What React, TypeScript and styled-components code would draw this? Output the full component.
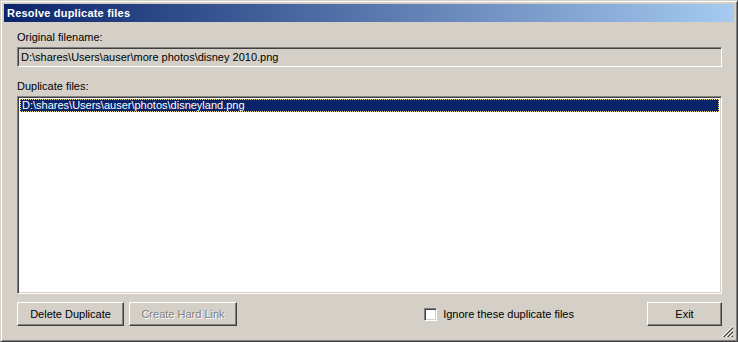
import React from 'react';
import styled, { createGlobalStyle } from 'styled-components';

const GlobalStyle = createGlobalStyle`
  html, body {
    margin: 0;
    padding: 0;
    background: #d4d0c8;
  }
  body {
    font-family: "Liberation Sans", Arial, sans-serif;
    font-size: 11px;
  }
`;

const Window = styled.div`
  box-sizing: border-box;
  width: 738px;
  height: 342px;
  background: #d4d0c8;
  border: 1px solid;
  border-color: #d4d0c8 #404040 #404040 #d4d0c8;
  box-shadow: inset 1px 1px #ffffff, inset -1px -1px #808080;
  padding: 3px;
  display: flex;
  flex-direction: column;
  position: relative;
`;

const TitleBar = styled.div`
  height: 18px;
  background: linear-gradient(to right, #0a246a, #a6caf0);
  color: #ffffff;
  font-weight: bold;
  font-size: 11px;
  letter-spacing: 0.2px;
  display: flex;
  align-items: center;
  padding-left: 3px;
`;

const Body = styled.div`
  flex: 1;
  display: flex;
  flex-direction: column;
  padding: 9px 12px 12px 13px;
`;

const Label = styled.div`
  color: #000000;
  line-height: 13px;
  margin-bottom: 3px;
`;

const ReadOnlyField = styled.div`
  box-sizing: border-box;
  height: 20px;
  border: 1px solid;
  border-color: #808080 #ffffff #ffffff #808080;
  box-shadow: inset 1px 1px #404040, inset -1px -1px #d4d0c8;
  background: #d4d0c8;
  display: flex;
  align-items: center;
  padding-left: 3px;
  margin-bottom: 13px;
  white-space: nowrap;
`;

const ListBox = styled.div`
  box-sizing: border-box;
  flex: 1;
  border: 1px solid;
  border-color: #808080 #ffffff #ffffff #808080;
  box-shadow: inset 1px 1px #404040, inset -1px -1px #d4d0c8;
  background: #ffffff;
  padding: 2px;
`;

const ListItem = styled.div<{ $selected?: boolean }>`
  box-sizing: border-box;
  height: 13px;
  line-height: 11px;
  padding-left: 1px;
  white-space: nowrap;
  color: ${(p) => (p.$selected ? '#ffffff' : '#000000')};
  background: ${(p) => (p.$selected ? '#0a246a' : 'transparent')};
  border: 1px dotted ${(p) => (p.$selected ? '#f5e08a' : 'transparent')};
`;

const ButtonRow = styled.div`
  display: flex;
  align-items: center;
  margin-top: 8px;
  height: 24px;
`;

const Button = styled.button<{ $width: number; $last?: boolean }>`
  box-sizing: border-box;
  width: ${(p) => p.$width}px;
  height: 24px;
  margin-right: ${(p) => (p.$last ? 0 : 5)}px;
  padding: 0;
  background: #d4d0c8;
  border: 1px solid;
  border-color: #ffffff #404040 #404040 #ffffff;
  box-shadow: inset -1px -1px #808080, inset 1px 1px #d4d0c8;
  font-family: "Liberation Sans", Arial, sans-serif;
  font-size: 11px;
  color: #000000;

  &:disabled {
    color: #808080;
    text-shadow: 1px 1px #ffffff;
  }
`;

const Spacer = styled.div`
  flex: 1;
`;

const CheckLabel = styled.label`
  display: flex;
  align-items: center;
  gap: 6px;
  margin-right: 73px;
`;

const CheckBox = styled.span`
  box-sizing: border-box;
  width: 13px;
  height: 13px;
  background: #ffffff;
  border: 1px solid;
  border-color: #808080 #ffffff #ffffff #808080;
  box-shadow: inset 1px 1px #404040, inset -1px -1px #d4d0c8;
`;

const Grip = styled.svg`
  position: absolute;
  right: 3px;
  bottom: 3px;
`;

export default function App() {
  return (
    <>
      <GlobalStyle />
      <Window>
        <TitleBar>Resolve duplicate files</TitleBar>
        <Body>
          <Label>Original filename:</Label>
          <ReadOnlyField>D:\shares\Users\auser\more photos\disney 2010.png</ReadOnlyField>
          <Label>Duplicate files:</Label>
          <ListBox>
            <ListItem $selected>D:\shares\Users\auser\photos\disneyland.png</ListItem>
          </ListBox>
          <ButtonRow>
            <Button $width={107}>Delete Duplicate</Button>
            <Button $width={108} disabled>
              Create Hard Link
            </Button>
            <Spacer />
            <CheckLabel>
              <CheckBox />
              Ignore these duplicate files
            </CheckLabel>
            <Button $width={75} $last>
              Exit
            </Button>
          </ButtonRow>
        </Body>
        <Grip width="12" height="12" viewBox="0 0 12 12">
          <path d="M11 1 L1 11 M11 5 L5 11 M11 9 L9 11" stroke="#808080" strokeWidth="1" />
          <path d="M11 2 L2 11 M11 6 L6 11 M11 10 L10 11" stroke="#404040" strokeWidth="1" />
          <path d="M11 0 L0 11 M11 4 L4 11 M11 8 L8 11" stroke="#ffffff" strokeWidth="1" />
        </Grip>
      </Window>
    </>
  );
}
